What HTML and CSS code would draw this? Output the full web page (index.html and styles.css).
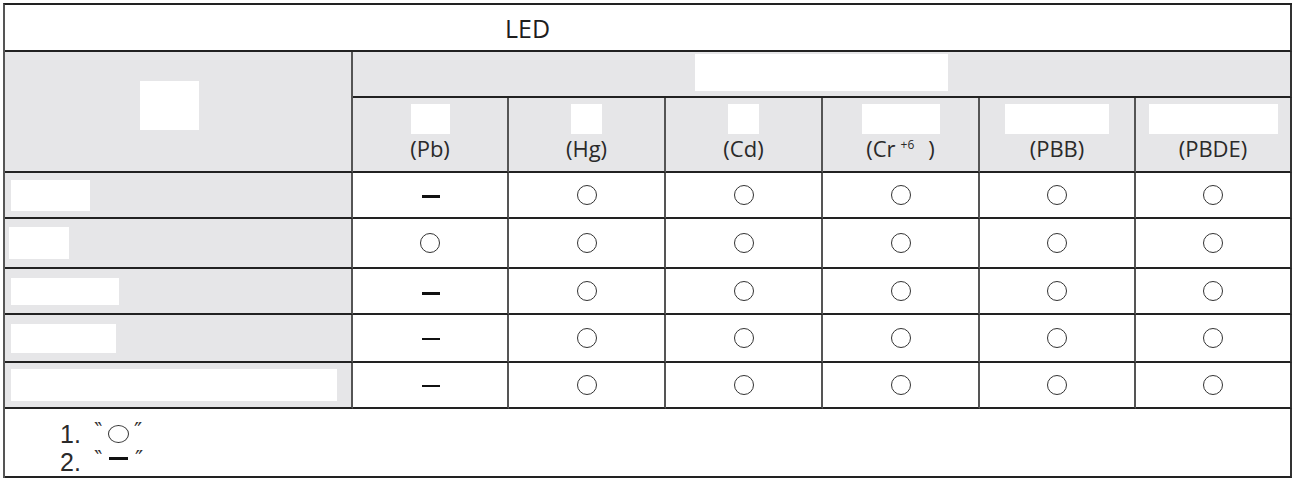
FILE: index.html
```html
<!DOCTYPE html>
<html lang="en">
<head>
<meta charset="utf-8">
<title>LED</title>
<link rel="stylesheet" href="styles.css">
</head>
<body>
<div class="sheet">
  <div class="cell title"><span class="title-text">LED</span></div>

  <div class="cell part-head gray"><span class="blank b-part"></span></div>
  <div class="cell group-head gray"><span class="blank b-group"></span></div>

  <div class="cell el gray"><span class="blank b-pb"></span><span class="el-name">(Pb)</span></div>
  <div class="cell el gray"><span class="blank b-hg"></span><span class="el-name">(Hg)</span></div>
  <div class="cell el gray"><span class="blank b-cd"></span><span class="el-name">(Cd)</span></div>
  <div class="cell el gray"><span class="blank b-cr"></span><span class="el-name">(Cr<sup class="sup">+6</sup>)</span></div>
  <div class="cell el gray"><span class="blank b-pbb"></span><span class="el-name">(PBB)</span></div>
  <div class="cell el gray last"><span class="blank b-pbde"></span><span class="el-name">(PBDE)</span></div>

  <div class="cell label gray"><span class="blank l1"></span></div>
  <div class="cell mark"><span class="no"></span></div>
  <div class="cell mark"><span class="ok"></span></div>
  <div class="cell mark"><span class="ok"></span></div>
  <div class="cell mark"><span class="ok"></span></div>
  <div class="cell mark"><span class="ok"></span></div>
  <div class="cell mark last"><span class="ok"></span></div>

  <div class="cell label label-tight gray"><span class="blank l2"></span></div>
  <div class="cell mark"><span class="ok"></span></div>
  <div class="cell mark"><span class="ok"></span></div>
  <div class="cell mark"><span class="ok"></span></div>
  <div class="cell mark"><span class="ok"></span></div>
  <div class="cell mark"><span class="ok"></span></div>
  <div class="cell mark last"><span class="ok"></span></div>

  <div class="cell label gray"><span class="blank l3"></span></div>
  <div class="cell mark"><span class="no no-low"></span></div>
  <div class="cell mark"><span class="ok"></span></div>
  <div class="cell mark"><span class="ok"></span></div>
  <div class="cell mark"><span class="ok"></span></div>
  <div class="cell mark"><span class="ok"></span></div>
  <div class="cell mark last"><span class="ok"></span></div>

  <div class="cell label gray"><span class="blank l4"></span></div>
  <div class="cell mark"><span class="no thin"></span></div>
  <div class="cell mark"><span class="ok"></span></div>
  <div class="cell mark"><span class="ok"></span></div>
  <div class="cell mark"><span class="ok"></span></div>
  <div class="cell mark"><span class="ok"></span></div>
  <div class="cell mark last"><span class="ok"></span></div>

  <div class="cell label gray"><span class="blank l5"></span></div>
  <div class="cell mark"><span class="no thin"></span></div>
  <div class="cell mark"><span class="ok"></span></div>
  <div class="cell mark"><span class="ok"></span></div>
  <div class="cell mark"><span class="ok"></span></div>
  <div class="cell mark"><span class="ok"></span></div>
  <div class="cell mark last"><span class="ok"></span></div>

  <div class="cell notes last">
    <div class="note"><span class="num">1.</span><span class="q q-open">‶</span><span class="ok ok-note"></span><span class="q q-close">″</span></div>
    <div class="note"><span class="num">2.</span><span class="q q-open">‶</span><span class="no no-note"></span><span class="q q-close">″</span></div>
  </div>
</div>
</body>
</html>
```

FILE: styles.css
```css
html, body {
  margin: 0;
  padding: 0;
  background: #ffffff;
}

body {
  font-family: "Open Sans", "Noto Sans", "DejaVu Sans", sans-serif;
  color: #222222;
}

.sheet {
  display: grid;
  grid-template-columns: 348px 156px 157px 157px 157px 156px 156px;
  grid-template-rows: 47px 46px 75px 46px 50px 46px 48px 46px 69px;
  width: max-content;
  margin: 3px 0 0 3px;
  border-top: 2px solid #222222;
  border-left: 2px solid #555555;
}

.cell {
  box-sizing: border-box;
  border-right: 2px solid #555555;
  border-bottom: 2px solid #222222;
  background: #ffffff;
  min-width: 0;
}

.cell.last {
  border-right-color: #333333;
}

.gray {
  background: #e6e6e8;
}

.blank {
  display: block;
  background: #ffffff;
  flex: none;
}

/* title */
.title {
  grid-column: 1 / -1;
  display: flex;
  align-items: center;
  padding-left: 500px;
  border-right-color: #333333;
}

.title-text {
  font-size: 25px;
  line-height: 30px;
  color: #1e1e1e;
}

/* header */
.part-head {
  grid-row: 2 / 4;
  padding: 29px 0 0 135px;
}

.b-part {
  width: 59px;
  height: 49px;
}

.group-head {
  grid-column: 2 / -1;
  padding: 2px 0 0 342px;
  border-right-color: #333333;
}

.b-group {
  width: 253px;
  height: 37px;
}

.el {
  display: flex;
  flex-direction: column;
  align-items: center;
  padding-top: 6px;
}

.el .blank {
  height: 30px;
  margin-bottom: 2px;
}

.b-pb { width: 39px; }
.b-hg { width: 31px; }
.b-cd { width: 31px; }
.b-cr { width: 78px; }
.b-pbb { width: 104px; }
.b-pbde { width: 129px; }

.el-name {
  font-size: 22px;
  line-height: 24px;
  color: #2a2a2a;
  white-space: nowrap;
}

.sup {
  font-size: 12px;
  vertical-align: 8px;
  line-height: 0;
  margin: 0 14px 0 5px;
}

/* body rows */
.label {
  display: flex;
  align-items: center;
  padding-left: 6px;
}

.label-tight {
  padding-left: 4px;
}

.l1 { width: 79px; height: 31px; }
.l2 { width: 60px; height: 32px; }
.l3 { width: 108px; height: 27px; }
.l4 { width: 105px; height: 29px; }
.l5 { width: 326px; height: 32px; }

.mark {
  display: flex;
  align-items: center;
  justify-content: center;
}

.ok {
  display: block;
  box-sizing: border-box;
  width: 20px;
  height: 20px;
  border: 1.5px solid #333333;
  border-radius: 50%;
}

.no {
  display: block;
  width: 18px;
  height: 3px;
  background: #111111;
  margin: 2px 0 0 2px;
}

.no-low {
  margin-top: 5px;
}

.no.thin {
  height: 2px;
}

/* notes */
.notes {
  grid-column: 1 / -1;
  padding: 11px 0 0 55px;
}

.note {
  font-family: "Liberation Sans", "Open Sans", sans-serif;
  font-size: 25px;
  line-height: 28px;
  color: #2a2a2a;
  white-space: nowrap;
}

.num {
  display: inline-block;
  width: 34px;
}

.q {
  display: inline-block;
  font-family: "DejaVu Sans", sans-serif;
  font-size: 22px;
  line-height: 20px;
  vertical-align: 5px;
  color: #333333;
}

.q-open {
  width: 14px;
}

.q-close {
  margin-left: 5px;
}

.ok-note {
  display: inline-block;
  width: 21px;
  height: 18px;
  vertical-align: baseline;
}

.no-note {
  display: inline-block;
  width: 19px;
  height: 3px;
  margin: 0 2px 11px 1px;
  vertical-align: baseline;
}
```
